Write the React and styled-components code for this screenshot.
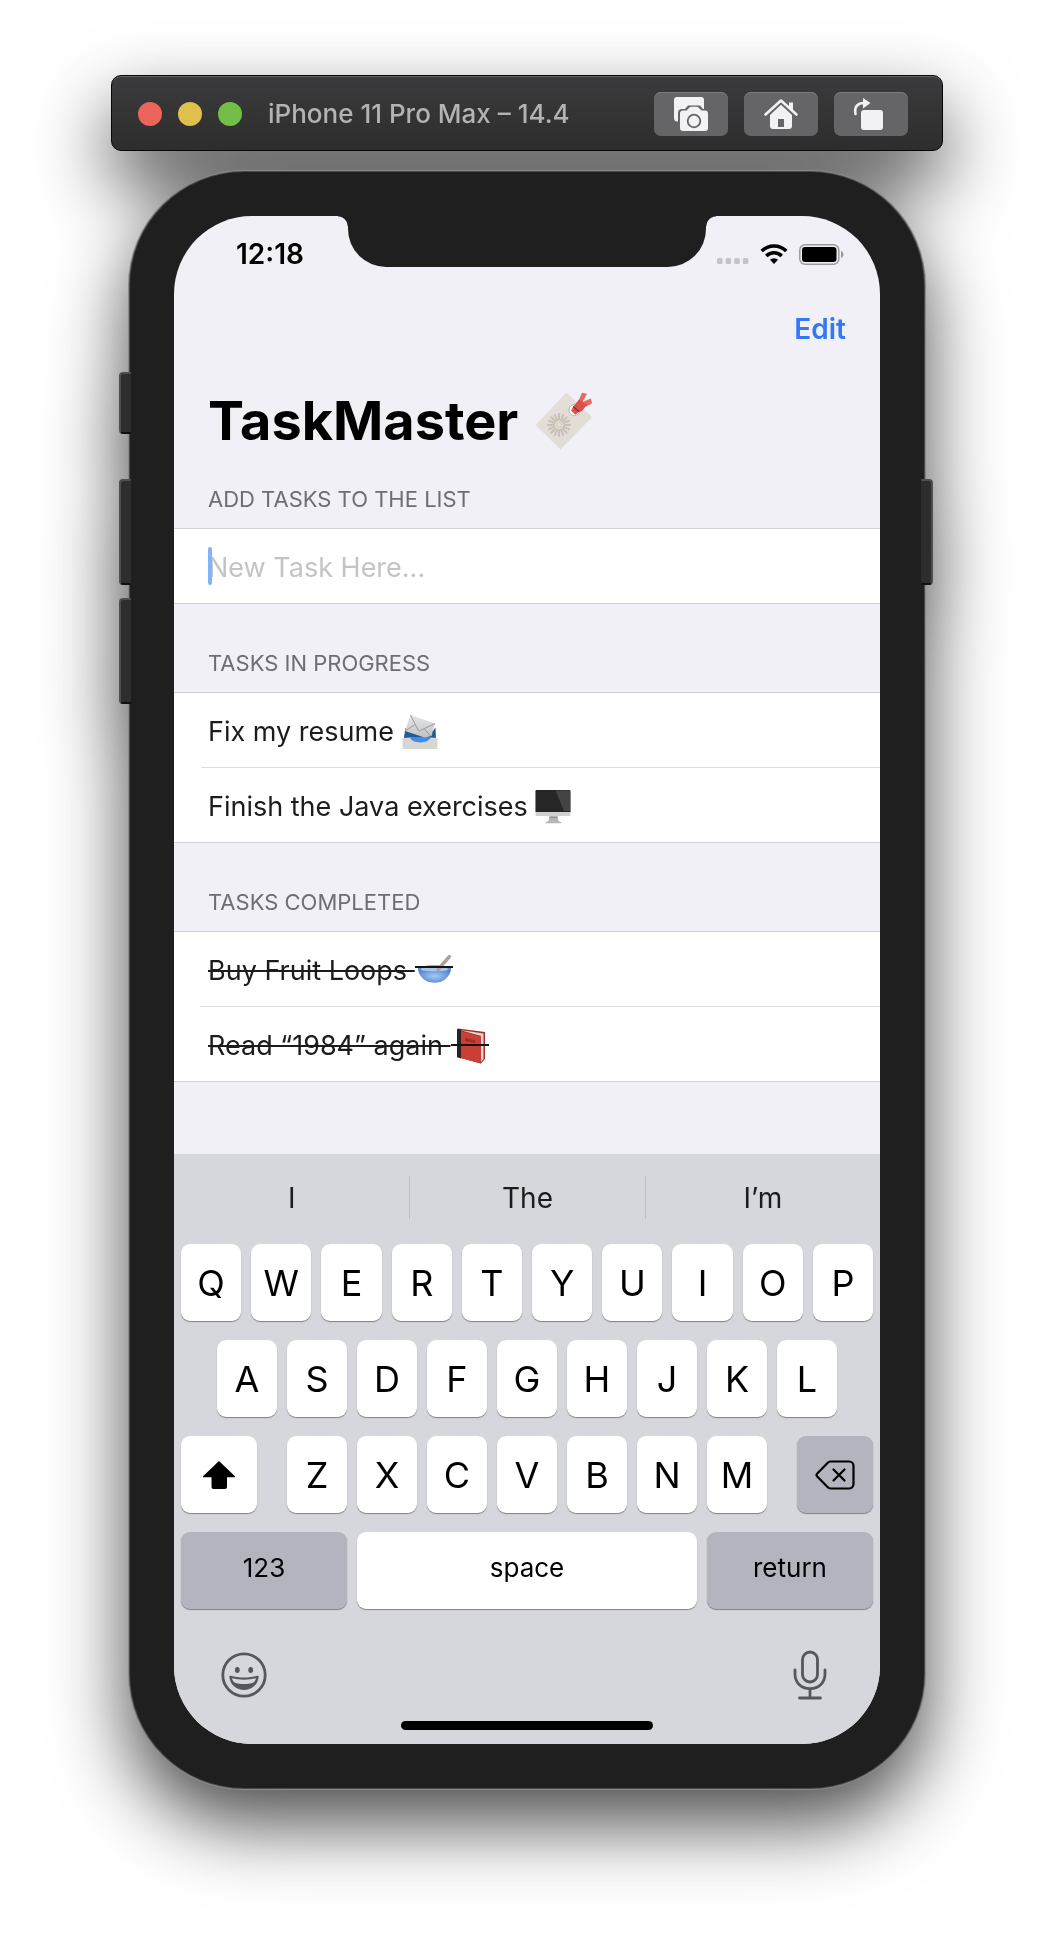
import React, { useState } from "react";
import styled, { createGlobalStyle, css } from "styled-components";

const GlobalStyle = createGlobalStyle`
  *, *::before, *::after { box-sizing: border-box; }
  body {
    margin: 0;
    background: #fff;
    font-family: Inter, "Open Sans", sans-serif;
    color: #1c1c1e;
  }
  button, input { font: inherit; color: inherit; }
`;

/* ---------- simulator window ---------- */

const Desktop = styled.main`
  display: flex;
  flex-direction: column;
  align-items: center;
  padding: 75px 111px 150px;
  overflow: hidden;
`;

const Stage = styled.div`
  width: 100%;
  max-width: 832px;
  display: flex;
  flex-direction: column;
  align-items: center;
  gap: 21px;
  filter: drop-shadow(0 34px 38px rgba(0, 0, 0, 0.7));
`;

const TitleBar = styled.header`
  width: 100%;
  height: 76px;
  display: flex;
  align-items: center;
  gap: 26px;
  padding: 2px 34px 0 26px;
  border: 1px solid #060606;
  border-radius: 10px;
  background: linear-gradient(#3b3b3d, #2d2d2d);
  box-shadow: inset 0 2px 0 -1px #666;
`;

const TrafficLights = styled.div`
  display: flex;
  gap: 16px;
`;

const Light = styled.button`
  width: 24px;
  height: 24px;
  padding: 0;
  border: 0;
  border-radius: 50%;
  background: ${(p) => p.$color};
`;

const WindowTitle = styled.h2`
  flex: 1;
  margin: 0;
  font-size: 26px;
  line-height: 32px;
  font-weight: 500;
  color: #b3b3b4;
  white-space: nowrap;
`;

const ToolGroup = styled.div`
  display: flex;
  gap: 16px;
`;

const ToolButton = styled.button`
  width: 74px;
  height: 44px;
  padding: 0;
  display: grid;
  place-items: center;
  border: 0;
  border-radius: 7px;
  background: #656567;
  box-shadow: inset 0 1px 0 #7c7c7e;
`;

/* ---------- device ---------- */

const Device = styled.section`
  position: relative;
  width: calc(100% - 38px);
  padding: 44px;
  border-radius: 114px;
  background: #1f1f1f;
  box-shadow: 0 0 0 1px #4a4a4a, 0 0 0 2px #8a8a8a;
`;

const SideButton = styled.span`
  position: absolute;
  top: ${(p) => p.$top}px;
  ${(p) => p.$side}: ${(p) => (p.$side === "left" ? -11 : -9)}px;
  width: 12px;
  height: ${(p) => p.$height}px;
  border: 2px solid #4c4e4f;
  border-bottom-color: #101010;
  border-${(p) => (p.$side === "left" ? "right" : "left")}: 0;
  border-radius: ${(p) => (p.$side === "left" ? "4px 0 0 4px" : "0 4px 4px 0")};
  background: #2d2d2d;
`;

const Screen = styled.div`
  position: relative;
  overflow: hidden;
  border-radius: 78px;
  background: #f1f0f6;
`;

const Notch = styled.div`
  position: absolute;
  top: 0;
  left: 50%;
  width: 358px;
  height: 51px;
  margin-left: -179px;
  border-radius: 0 0 38px 38px;
  background: #1f1f1f;

  &::before,
  &::after {
    content: "";
    position: absolute;
    top: 0;
    width: 10px;
    height: 10px;
  }
  &::before {
    right: 100%;
    background: radial-gradient(circle at 0 100%, transparent 9px, #1f1f1f 10px);
  }
  &::after {
    left: 100%;
    background: radial-gradient(circle at 100% 100%, transparent 9px, #1f1f1f 10px);
  }
`;

const StatusBar = styled.div`
  display: flex;
  justify-content: space-between;
  align-items: center;
  height: 76px;
  padding: 0 36px 0 62px;
`;

const Clock = styled.time`
  font-size: 28px;
  line-height: 36px;
  font-weight: 600;
  color: #000;
`;

const StatusIcons = styled.div`
  display: flex;
  align-items: center;
  gap: 11px;
`;

const NavBar = styled.nav`
  display: flex;
  justify-content: flex-end;
  height: 74px;
  align-items: center;
  padding: 0 34px;
`;

const EditButton = styled.button`
  padding: 0;
  border: 0;
  background: none;
  font-size: 28px;
  line-height: 36px;
  font-weight: 600;
  color: #3478f6;
`;

const LargeTitle = styled.h1`
  display: flex;
  align-items: center;
  gap: 17px;
  height: 109px;
  margin: 0;
  padding: 0 34px;
  font-size: 54px;
  line-height: 68px;
  font-weight: 700;
  color: #000;
`;

/* ---------- grouped list ---------- */

const SectionTitle = styled.h3`
  display: flex;
  align-items: flex-end;
  height: ${(p) => (p.$first ? 53 : 88)}px;
  margin: 0;
  padding: 0 34px 15px;
  font-size: 22px;
  line-height: 28px;
  font-weight: 400;
  color: #6d6d72;
  text-transform: uppercase;
`;

const List = styled.ul`
  margin: 0;
  padding: 0;
  list-style: none;
  border-top: 1px solid #d3d3d6;
  background: #fff;
`;

const Row = styled.li`
  position: relative;
  display: flex;
  align-items: center;
  height: 75px;
  padding: 3px 34px 0 7px;
  margin-left: 27px;
  font-size: 27px;
  line-height: 36px;
  border-bottom: 1px solid #dedee0;

  &:last-child {
    margin-left: 0;
    padding-left: 34px;
    border-bottom-color: #d3d3d6;
  }
`;

const TaskText = styled.span`
  white-space: pre;
  ${(p) =>
    p.$done &&
    css`
      text-decoration: line-through;
      text-decoration-thickness: 2px;
    `}
`;

const TaskInput = styled.input`
  flex: 1;
  min-width: 0;
  padding: 0;
  border: 0;
  outline: 0;
  background: none;
  caret-color: #3478f6;

  &::placeholder {
    color: #c4c4c6;
    opacity: 1;
  }
`;

const Caret = styled.span`
  position: absolute;
  left: 34px;
  top: 18px;
  width: 4px;
  height: 38px;
  border-radius: 2px;
  background: #82b4fb;
`;

/* ---------- keyboard ---------- */

const Keyboard = styled.div`
  margin-top: 72px;
  background: #d6d7dc;
`;

const Suggestions = styled.div`
  display: grid;
  grid-template-columns: repeat(3, 1fr);
  padding: 22px 0 25px;
`;

const Suggestion = styled.button`
  height: 43px;
  padding: 0;
  border: 0;
  background: none;
  font-size: 28px;
  line-height: 36px;

  & + & {
    border-left: 1px solid #bdbec3;
  }
`;

const Keys = styled.div`
  display: grid;
  gap: 19px;
  padding: 0 7px;
`;

const KeyRow = styled.div`
  display: flex;
  gap: ${(p) => p.$gap || 10}px;
  padding: 0 ${(p) => p.$inset || 0}px;
`;

const LetterGroup = styled.div`
  flex: 1;
  display: flex;
  gap: 10px;
`;

const Key = styled.button`
  flex: ${(p) => (p.$width ? `0 0 ${p.$width}px` : "1 1 0")};
  min-width: 0;
  height: 77px;
  padding: 0 0 ${(p) => (p.$word ? 6 : 0)}px;
  display: flex;
  align-items: center;
  justify-content: center;
  border: 0;
  border-radius: 9px;
  background: ${(p) => (p.$muted ? "#b2b4be" : "#fff")};
  box-shadow: 0 1px 1px #808187;
  color: #000;
  font-size: ${(p) => (p.$word ? 26 : 36)}px;
  line-height: 44px;
  font-weight: 400;
`;

const KeyboardFooter = styled.div`
  display: flex;
  justify-content: space-between;
  padding: 40px 46px 0;
`;

const FooterButton = styled.button`
  width: 48px;
  height: 52px;
  padding: 0;
  display: grid;
  place-items: center;
  border: 0;
  background: none;
`;

const HomeIndicator = styled.div`
  width: 252px;
  height: 9px;
  margin: 20px auto 0;
  border-radius: 5px;
  background: #000;
`;

const KeyboardEnd = styled.div`
  height: 14px;
`;

/* ---------- icons ---------- */

const CameraIcon = () => (
  <svg width="36" height="36" viewBox="0 0 36 36" aria-hidden="true">
    <path d="M4 1h24a3 3 0 0 1 3 3v12H6v9.500H4.500A3.500 3.500 0 0 1 1 22V4a3 3 0 0 1 3-3z" fill="#f2f2f4" />
    <path d="M5 17a4 4 0 0 1 4-4h3l3-3.500h12l3 3.500h5v20H5z" fill="#656567" />
    <path d="M10 14.500h3.500l3-3a3 3 0 0 1 2-.8h5a3 3 0 0 1 2 .8l3 3H32a3 3 0 0 1 3 3V32a3 3 0 0 1-3 3H10a3 3 0 0 1-3-3V17.500a3 3 0 0 1 3-3z" fill="#f2f2f4" />
    <circle cx="21" cy="25" r="6.300" fill="none" stroke="#656567" strokeWidth="1.800" />
  </svg>
);

const HouseIcon = () => (
  <svg width="36" height="32" viewBox="0 0 36 32" aria-hidden="true">
    <path d="M26 4.500h4V13l-4-4z" fill="#f2f2f4" />
    <path d="M2.500 16.500 18 2.500 33.500 16.500" fill="none" stroke="#f2f2f4" strokeWidth="2.600" strokeLinecap="round" strokeLinejoin="round" />
    <path d="M7 17 18 6.800 29 17v11a3 3 0 0 1-3 3H10a3 3 0 0 1-3-3z" fill="#f2f2f4" />
    <path d="M15 21h6v8h-6z" fill="#656567" />
  </svg>
);

const RotateIcon = () => (
  <svg width="36" height="36" viewBox="0 0 36 36" aria-hidden="true">
    <rect x="8" y="14" width="22" height="20" rx="3" fill="#f2f2f4" />
    <path d="M2.500 18C1 10.500 5 7 11 7" fill="none" stroke="#f2f2f4" strokeWidth="2.600" strokeLinecap="round" />
    <path d="M10 2v10.500L17.500 7z" fill="#f2f2f4" />
  </svg>
);

const SignalDots = () => (
  <svg width="32" height="20" viewBox="0 0 32 20" aria-hidden="true">
    {[0, 8.600, 17.200, 25.800].map((x) => (
      <rect key={x} x={x} y="14" width="5.600" height="6" rx="1.500" fill="#c4c4c8" />
    ))}
  </svg>
);

const WifiIcon = () => (
  <svg width="28" height="20" viewBox="0 0 28 20" aria-hidden="true">
    <g fill="none" stroke="#000" strokeWidth="3.600">
      <path d="M1.700 7.100a17.400 17.400 0 0 1 24.600 0" />
      <path d="M6.300 12a10.900 10.900 0 0 1 15.400 0" />
    </g>
    <path d="M14 20l-4-4.200a5.800 5.800 0 0 1 8 0z" />
  </svg>
);

const BatteryIcon = () => (
  <svg width="45" height="21" viewBox="0 0 45 21" aria-hidden="true">
    <rect x="0.800" y="0.800" width="39" height="19.400" rx="5.200" fill="none" stroke="#9b9b9f" strokeWidth="1.500" />
    <rect x="3" y="3" width="34.500" height="15" rx="3" fill="#000" />
    <path d="M42 7c1.700.6 2.500 2 2.500 3.500S43.700 13.400 42 14z" fill="#9b9b9f" />
  </svg>
);

const ShiftIcon = () => (
  <svg width="34" height="30" viewBox="0 0 34 30" aria-hidden="true">
    <path d="M17 1 33 16.200c.4.500.2 1-.5 1H25V27a2 2 0 0 1-2 2H11.500a2 2 0 0 1-2-2v-9.800H1.500c-.7 0-.9-.5-.5-1z" />
  </svg>
);

const DeleteIcon = () => (
  <svg width="40" height="30" viewBox="0 0 40 30" fill="none" stroke="#000" strokeWidth="2.200" strokeLinecap="round" strokeLinejoin="round" aria-hidden="true">
    <path d="M15.500 1.500H34a4.500 4.500 0 0 1 4.500 4.500v18a4.500 4.500 0 0 1-4.500 4.500H15.500a4 4 0 0 1-2.700-1.200L2 16.200a1.600 1.600 0 0 1 0-2.400L12.800 2.700a4 4 0 0 1 2.700-1.200z" />
    <path d="M18.500 9.500l11 11M29.500 9.500l-11 11" />
  </svg>
);

const SmileIcon = () => (
  <svg width="46" height="46" viewBox="0 0 46 46" aria-hidden="true">
    <circle cx="23" cy="23" r="21.200" fill="none" stroke="#55575b" strokeWidth="2.800" />
    <ellipse cx="16.300" cy="18" rx="2.400" ry="3" fill="#55575b" />
    <ellipse cx="29.700" cy="18" rx="2.400" ry="3" fill="#55575b" />
    <path d="M8.300 24.800c0-.8.500-1.200 1.300-1 8.400 2.400 18.400 2.400 26.800 0 .8-.2 1.300.2 1.300 1-1 8.500-7.400 13.200-14.700 13.200S9.300 33.300 8.300 24.800z" fill="#55575b" />
    <path d="M10.800 26.300c8 1.800 16.400 1.800 24.400 0-.8 1.900-1.600 3.200-2.700 4.300-5.800 2-13.200 2-19 0-1.100-1.100-2-2.400-2.700-4.300z" fill="#d6d7dc" />
  </svg>
);

const MicIcon = () => (
  <svg width="34" height="50" viewBox="0 0 34 50" fill="none" stroke="#55575b" strokeWidth="2.800" strokeLinecap="round" aria-hidden="true">
    <rect x="9.500" y="2" width="15" height="30" rx="7.500" />
    <path d="M2 20v4c0 8.500 6 14.700 15 14.700S32 32.500 32 24v-4M17 39V48M6.500 48h21" />
  </svg>
);

const TagEmoji = () => (
  <svg width="58" height="58" viewBox="0 0 58 58" aria-hidden="true">
    <defs>
      <linearGradient id="tag" x1="0" y1="0" x2="1" y2="1">
        <stop offset="0" stopColor="#e6e0da" />
        <stop offset="1" stopColor="#dfdad2" />
      </linearGradient>
    </defs>
    <path d="M31.500 0.500 57 25 25.500 57.500 0.500 33z" fill="url(#tag)" />
    <g stroke="#c8c0b5" strokeWidth="2" strokeLinecap="round">
      {Array.from({ length: 16 }, (_, i) => (
        <path key={i} d="M24 28v-6" transform={`rotate(${i * 22.5} 24 33)`} />
      ))}
    </g>
    <circle cx="24" cy="33" r="2.500" fill="none" stroke="#cfc8be" />
    <circle cx="39.500" cy="18" r="5.500" fill="#fff" stroke="#b9b3aa" />
    <path d="M42 12 47 .8l5 1L47.500 10 56 6.500l1 5-10 5z" fill="#e8685f" />
    <path d="M36 18.500l3-5 5-6 8 5-5 6.500-4 1.500-2.500 2.200z" fill="#dd5049" />
    <path d="M38 14.500l6 5" stroke="#7f2a2a" strokeWidth="1.200" />
  </svg>
);

const InboxEmoji = () => (
  <svg width="36" height="36" viewBox="0 0 36 36" aria-hidden="true">
    <defs>
      <linearGradient id="envelope" x1="0" y1="0" x2="0" y2="1">
        <stop offset="0" stopColor="#e6e6e6" />
        <stop offset="1" stopColor="#c2c3c5" />
      </linearGradient>
    </defs>
    <path d="M2 23l1.500-9L31 17l2.500-3.500L34 25H2z" fill="#235a94" />
    <path d="M8 23h20v7H8z" fill="#3f8bea" />
    <path d="M8.500 1 33 9.500 29.500 22l-7 1.500L3 17z" fill="url(#envelope)" />
    <path d="M8.500 1l7.500 15c.6 1 1.500 1.200 2.400.5L33 9.500M3 17l9.500-6M28.500 22l-6-7" fill="none" stroke="#9a9a9c" strokeWidth="1" />
    <path d="M.5 24 8 23.500c2.500 6.500 18 6.500 20.500 0l7 .5V34a1 1 0 0 1-1 1h-33a1 1 0 0 1-1-1z" fill="#d8d6d1" />
  </svg>
);

const MonitorEmoji = () => (
  <svg width="36" height="36" viewBox="0 0 36 36" aria-hidden="true">
    <path d="M14.500 27h8l1 5 3 1.500v.8h-16v-.8l3-1.500z" fill="#b5b5b7" />
    <rect x=".5" y="1" width="35" height="26" rx="1.500" fill="#d0d0d2" />
    <path d="M.5 23V2a1 1 0 0 1 1-1h33a1 1 0 0 1 1 1v21z" fill="#262626" />
    <path d="M20.500 1.500H35V22h-6z" fill="#444" />
    <path d="M14.500 28h8v1h-8z" fill="#8f8f91" />
  </svg>
);

const BowlEmoji = () => (
  <svg width="38" height="36" viewBox="0 0 38 36" aria-hidden="true">
    <defs>
      <radialGradient id="bowl" cx=".5" cy=".55" r=".55">
        <stop offset="0" stopColor="#a5c8f8" />
        <stop offset="1" stopColor="#5585cc" />
      </radialGradient>
    </defs>
    <path d="M3 15h33c0 6-4 11-9.500 13.500-2 1.500-12 1.500-14 0C7 26 3 21 3 15z" fill="url(#bowl)" />
    <ellipse cx="19.500" cy="15.500" rx="16.500" ry="3.300" fill="#5b8bd3" />
    <ellipse cx="19.500" cy="16.200" rx="14" ry="2.200" fill="#a9c6ee" />
    <path d="M34.500 3.500 23 16.500" stroke="#aaa2a2" strokeWidth="3.400" strokeLinecap="round" />
    <path d="M0 14h38" stroke="#151517" strokeWidth="2" />
  </svg>
);

const BookEmoji = () => (
  <svg width="38" height="36" viewBox="0 0 38 36" aria-hidden="true">
    <path d="M7 .5 34 4v27l-4 4.500L6 29V2z" fill="#a72f26" />
    <path d="M9 2 32.500 5.500V31L30 34V8z" fill="#d9d9d9" />
    <path d="M6 2.500l24 5.500v27.500L6 29z" fill="#c93f33" />
    <path d="M6 1 10 1.500v29L6 29z" fill="#2a2222" />
    <path d="M14 10l10 2v3l-10-2z" fill="#a52d25" />
    <path d="M0 17h38" stroke="#151517" strokeWidth="2" />
  </svg>
);

/* ---------- app ---------- */

const inProgress = [
  { text: "Fix my resume", Icon: InboxEmoji },
  { text: "Finish the Java exercises", Icon: MonitorEmoji },
];

const completed = [
  { text: "Buy Fruit Loops", Icon: BowlEmoji },
  { text: "Read “1984” again", Icon: BookEmoji },
];

function TaskSection({ title, tasks, done }) {
  return (
    <section>
      <SectionTitle>{title}</SectionTitle>
      <List>
        {tasks.map(({ text, Icon }) => (
          <Row key={text}>
            <TaskText $done={done}>{text + " "}</TaskText>
            <Icon />
          </Row>
        ))}
      </List>
    </section>
  );
}

const letters = (row) => row.split("").map((c) => <Key key={c}>{c}</Key>);

export default function App() {
  const [task, setTask] = useState("");
  return (
    <>
      <GlobalStyle />
      <Desktop>
        <Stage>
          <TitleBar>
            <TrafficLights>
              <Light $color="#ed655a" aria-label="Close" />
              <Light $color="#e0c04c" aria-label="Minimize" />
              <Light $color="#72be47" aria-label="Zoom" />
            </TrafficLights>
            <WindowTitle>iPhone 11 Pro Max – 14.4</WindowTitle>
            <ToolGroup>
              <ToolButton aria-label="Screenshot"><CameraIcon /></ToolButton>
              <ToolButton aria-label="Home"><HouseIcon /></ToolButton>
              <ToolButton aria-label="Rotate"><RotateIcon /></ToolButton>
            </ToolGroup>
          </TitleBar>

          <Device>
            <SideButton $side="left" $top={200} $height={62} />
            <SideButton $side="left" $top={307} $height={106} />
            <SideButton $side="left" $top={426} $height={106} />
            <SideButton $side="right" $top={307} $height={106} />
            <Screen>
              <Notch />
              <StatusBar>
                <Clock>12:18</Clock>
                <StatusIcons>
                  <SignalDots />
                  <WifiIcon />
                  <BatteryIcon />
                </StatusIcons>
              </StatusBar>
              <NavBar>
                <EditButton>Edit</EditButton>
              </NavBar>
              <LargeTitle>
                TaskMaster <TagEmoji />
              </LargeTitle>

              <section>
                <SectionTitle $first as="label" htmlFor="new-task">Add tasks to the list</SectionTitle>
                <List>
                  <Row>
                    <TaskInput
                      id="new-task"
                      placeholder="New Task Here..."
                      value={task}
                      onChange={(e) => setTask(e.target.value)}
                    />
                    {task === "" && <Caret />}
                  </Row>
                </List>
              </section>
              <TaskSection title="Tasks in progress" tasks={inProgress} />
              <TaskSection title="Tasks completed" tasks={completed} done />

              <Keyboard>
                <Suggestions>
                  <Suggestion>I</Suggestion>
                  <Suggestion>The</Suggestion>
                  <Suggestion>I’m</Suggestion>
                </Suggestions>
                <Keys>
                  <KeyRow>{letters("QWERTYUIOP")}</KeyRow>
                  <KeyRow $inset={36}>{letters("ASDFGHJKL")}</KeyRow>
                  <KeyRow $gap={30}>
                    <Key $width={76} aria-label="Shift"><ShiftIcon /></Key>
                    <LetterGroup>{letters("ZXCVBNM")}</LetterGroup>
                    <Key $width={76} $muted aria-label="Delete"><DeleteIcon /></Key>
                  </KeyRow>
                  <KeyRow>
                    <Key $width={166} $muted $word>123</Key>
                    <Key $word>space</Key>
                    <Key $width={166} $muted $word>return</Key>
                  </KeyRow>
                </Keys>
                <KeyboardFooter>
                  <FooterButton aria-label="Emoji"><SmileIcon /></FooterButton>
                  <FooterButton aria-label="Dictate"><MicIcon /></FooterButton>
                </KeyboardFooter>
                <HomeIndicator />
                <KeyboardEnd />
              </Keyboard>
            </Screen>
          </Device>
        </Stage>
      </Desktop>
    </>
  );
}
